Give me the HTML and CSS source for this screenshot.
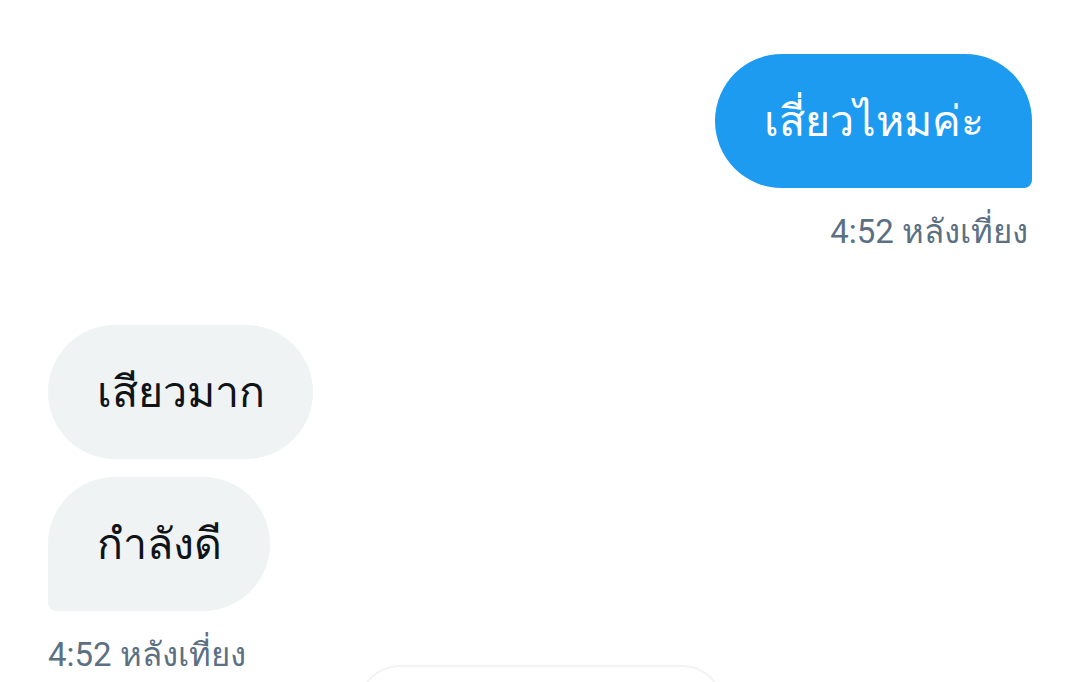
FILE: index.html
```html
<!DOCTYPE html>
<html lang="th">
<head>
<meta charset="utf-8">
<link rel="stylesheet" href="styles.css">
</head>
<body>
<div class="chat">
  <div class="group sent">
    <div class="bubble blue">เสี่ยวไหมค่ะ</div>
    <div class="time">4:52 หลังเที่ยง</div>
  </div>
  <div class="group received">
    <div class="bubble gray first">เสียวมาก</div>
    <div class="bubble gray last">กำลังดี</div>
    <div class="time">4:52 หลังเที่ยง</div>
  </div>
</div>
<div class="pill"></div>
</body>
</html>
```
FILE: styles.css
```css
html, body {
  margin: 0;
  padding: 0;
  background: #ffffff;
  overflow: hidden;
}
body {
  position: relative;
  width: 1080px;
  height: 682px;
  font-family: "Roboto", "Noto Sans", sans-serif;
}
.chat {
  display: flex;
  flex-direction: column;
  padding: 54px 48px 0 48px;
}
.group {
  display: flex;
  flex-direction: column;
}
.sent {
  align-items: flex-end;
}
.received {
  align-items: flex-start;
  margin-top: 73px;
  gap: 18px;
}
.bubble {
  height: 134px;
  box-sizing: border-box;
  display: flex;
  align-items: center;
  padding: 0 48px 0 49px;
  font-size: 43px;
  line-height: 60px;
  border-radius: 67px;
}
.blue {
  background: #1d9bf0;
  color: #ffffff;
  border-bottom-right-radius: 8px;
}
.gray {
  background: #eff3f4;
  color: #0f1419;
}
.gray.last {
  border-bottom-left-radius: 8px;
}
.time {
  font-size: 33px;
  line-height: 40px;
  height: 40px;
  color: #5b7083;
  margin-top: 24px;
  padding-right: 4px;
}
.received .time {
  margin-top: 6px;
}
.pill {
  position: absolute;
  left: 358px;
  top: 665px;
  width: 362px;
  height: 80px;
  border: 2px solid #f1f3f4;
  border-radius: 44px;
  background: #ffffff;
}
```
